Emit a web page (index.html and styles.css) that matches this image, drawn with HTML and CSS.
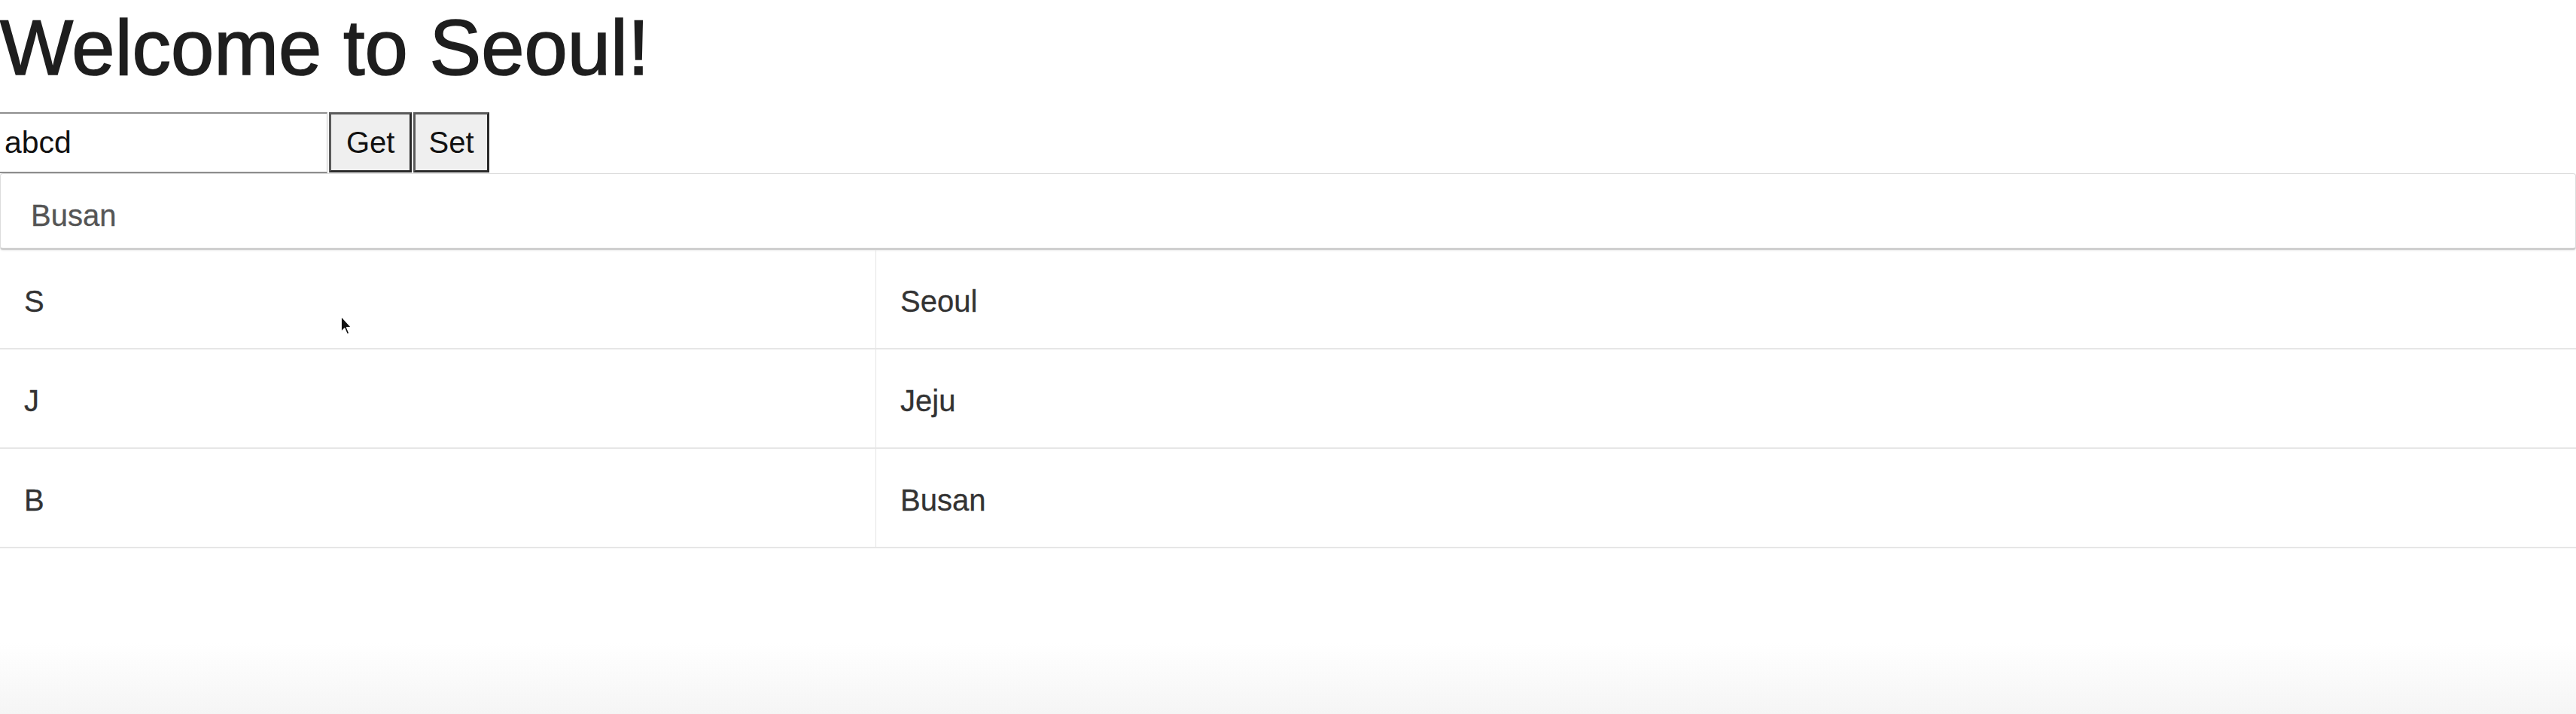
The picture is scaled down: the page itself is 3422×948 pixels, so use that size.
FILE: index.html
```html
<!DOCTYPE html>
<html lang="en">
<head>
<meta charset="utf-8">
<title>Welcome to Seoul!</title>
<link rel="stylesheet" href="styles.css">
</head>
<body>
<div class="app">
  <h1 class="title">Welcome to Seoul!</h1>
  <div class="controls">
    <input class="field" type="text" value="abcd">
    <button class="btn">Get</button>
    <button class="btn btn-set">Set</button>
  </div>
  <div class="result">Busan</div>
  <table class="cities">
    <tbody>
      <tr><td class="key">S</td><td class="val">Seoul</td></tr>
      <tr><td class="key">J</td><td class="val">Jeju</td></tr>
      <tr><td class="key">B</td><td class="val">Busan</td></tr>
    </tbody>
  </table>
  <svg class="cursor" width="16" height="27" viewBox="0 0 14 24" aria-hidden="true">
    <path d="M1 1 L1 19 L5 15 L8 22 L10.5 21 L7.5 14 L13 14 Z" fill="#111" stroke="#fff" stroke-width="1.2" stroke-linejoin="round"/>
  </svg>
</div>
</body>
</html>
```

FILE: styles.css
```css
html, body {
  margin: 0;
  padding: 0;
}

body {
  min-height: 100vh;
  background: linear-gradient(to bottom, #ffffff 0%, #ffffff 90%, #f5f5f5 100%);
  font-family: "Liberation Sans", Arial, Helvetica, sans-serif;
  color: #333;
}

.app {
  position: relative;
  display: flex;
  flex-direction: column;
}

.title {
  margin: 0 0 25px 0;
  padding-top: 4px;
  font-size: 103px;
  line-height: 120px;
  font-weight: 400;
  color: #1e1e1e;
  -webkit-text-stroke: 1.6px #1e1e1e;
  letter-spacing: 0;
}

.controls {
  display: flex;
  align-items: flex-start;
  gap: 2px;
  height: 81px;
}

.field {
  box-sizing: border-box;
  width: 435px;
  height: 81px;
  margin: 0;
  padding: 0 0 0 6px;
  border: 2px solid #8e8e8e;
  border-left: 0;
  border-right: 1px solid #c8c8c8;
  background: #fff;
  font-family: "Liberation Sans", Arial, sans-serif;
  font-size: 41px;
  color: #111;
  outline: none;
}

.btn {
  box-sizing: border-box;
  height: 80px;
  margin: 0;
  padding: 0 20px;
  border: 3px solid #5a5a5a;
  border-right-color: #2a2a2a;
  border-bottom-color: #2a2a2a;
  background: #efefef;
  font-family: "Liberation Sans", Arial, sans-serif;
  font-size: 40px;
  color: #111;
}

.btn-set {
  padding: 0 17px;
}

.result {
  box-sizing: border-box;
  height: 102px;
  display: flex;
  align-items: center;
  padding: 12px 0 0 40px;
  border: 1px solid #dcdcdc;
  border-bottom: 3px solid #cfcfcf;
  border-radius: 4px;
  box-shadow: 0 1px 2px rgba(0, 0, 0, 0.08);
  font-size: 40px;
  color: #555;
  -webkit-text-stroke: 0.3px #555;
  background: #fff;
}

.cities {
  width: 100%;
  border-collapse: collapse;
  margin-top: 0;
}

.cities td {
  padding: 45px 0 39px 32px;
  font-size: 40px;
  line-height: 46px;
  color: #333;
  -webkit-text-stroke: 0.3px #333;
  border-bottom: 2px solid #e6e6e6;
  vertical-align: top;
}

.cities .key {
  width: 1131px;
  border-right: 1px solid #e4e4e4;
}

.cursor {
  position: absolute;
  left: 452px;
  top: 419px;
}
```
